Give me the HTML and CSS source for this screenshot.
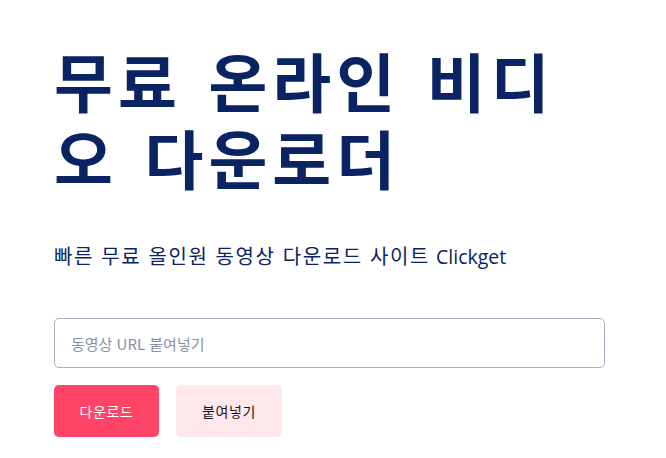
FILE: index.html
```html
<!DOCTYPE html>
<html lang="ko">
<head>
<meta charset="utf-8">
<title>Clickget</title>
<link rel="stylesheet" href="styles.css">
</head>
<body>
<main class="hero">
  <h1 class="title">무료 온라인 비디오 다운로더</h1>
  <p class="subtitle">빠른 무료 올인원 동영상 다운로드 사이트<span class="brand"> Clickget</span></p>
  <form class="form">
    <input class="url-input" type="text" placeholder="동영상 URL 붙여넣기">
    <div class="actions">
      <button class="btn btn-primary" type="button">다운로드</button>
      <button class="btn btn-secondary" type="button">붙여넣기</button>
    </div>
  </form>
</main>
</body>
</html>
```
FILE: styles.css
```css
html, body {
  margin: 0;
  padding: 0;
  background: #ffffff;
}
body {
  font-family: "Noto Sans CJK KR", "Noto Sans", sans-serif;
  color: #0a2463;
}
.hero {
  width: 551px;
  padding: 41px 0 0 54px;
}
.title {
  margin: 0;
  font-size: 64px;
  font-weight: 700;
  line-height: 77px;
  letter-spacing: 5.1px;
  word-spacing: 3.4px;
  color: #0a2463;
}
.subtitle {
  margin: 47px 0 0;
  font-size: 20px;
  line-height: 28px;
  letter-spacing: 1.6px;
  color: #0a2463;
}
.brand {
  font-family: "Open Sans", "Noto Sans", sans-serif;
  font-size: 19.5px;
  letter-spacing: 0;
  word-spacing: 1px;
}
.form {
  margin-top: 47px;
  display: flex;
  flex-direction: column;
  gap: 17px;
}
.url-input {
  box-sizing: border-box;
  width: 100%;
  height: 50px;
  padding: 0 16px;
  border: 1px solid #a9b2c2;
  border-radius: 5px;
  font-family: inherit;
  font-size: 15px;
  color: #0a2463;
  outline: none;
}
.url-input::placeholder {
  color: #8791a5;
}
.actions {
  display: flex;
  gap: 17px;
}
.btn {
  height: 52px;
  width: 105px;
  padding: 0;
  border: none;
  border-radius: 5px;
  font-family: inherit;
  font-size: 14px;
  letter-spacing: 0.6px;
  cursor: pointer;
}
.btn-primary {
  background: #ff4467;
  color: #ffffff;
}
.btn-secondary {
  width: 106px;
  background: #ffe8eb;
  color: #161616;
}
```
